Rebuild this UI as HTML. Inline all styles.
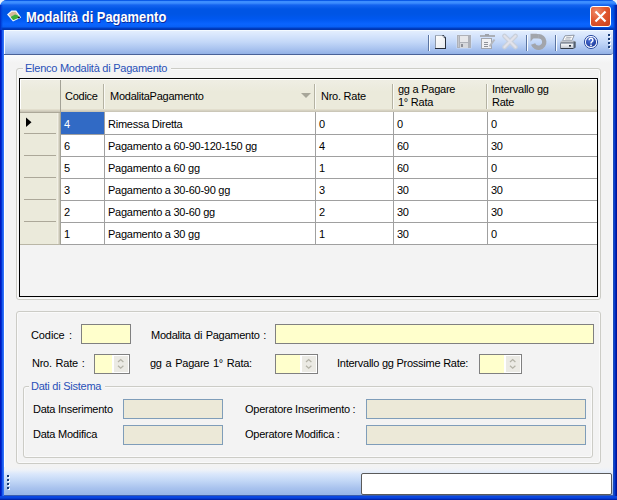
<!DOCTYPE html>
<html><head><meta charset="utf-8">
<style>
*{margin:0;padding:0;box-sizing:border-box}
html,body{width:617px;height:500px;overflow:hidden;background:#EAF2FB;font-family:"Liberation Sans",sans-serif;font-size:11px;color:#000}
.a{position:absolute}
.t{position:absolute;white-space:pre;line-height:13px;letter-spacing:-0.25px}
#frame{left:0;top:0;width:617px;height:500px;background:#0054E3;border-radius:7px 7px 0 0}
#title{left:0;top:0;width:617px;height:30px;background:linear-gradient(#0A5AE8 0px,#0A5AE8 1px,#3D8EFF 1px,#3D8EFF 3px,#1464F0 5px,#0055E5 9px,#0055E5 14px,#0058F0 19px,#0A64FF 24px,#0860F5 27px,#0040C8 28px,#0032A8 30px);border-radius:7px 7px 0 0}
#ttext{left:26px;top:9px;color:#fff;font-weight:bold;font-size:14px;line-height:16px;transform:scaleX(0.92);transform-origin:0 0;text-shadow:1px 1px 0 #0A2A9A}
#lb{left:0;top:30px;width:5px;height:470px;background:linear-gradient(90deg,#0018C0 0,#0018C0 1px,#0030D0 1px,#0030D0 2px,#1A5AF0 2px,#1A5AF0 3px,#3070F8 3px,#3070F8 4px,#FFFFFF 4px)}
#rb{left:612px;top:30px;width:5px;height:470px;background:linear-gradient(90deg,#F0FAFF 0,#F0FAFF 1px,#1C4AB8 1px,#1C4AB8 2px,#0840D0 2px,#0840D0 3px,#0028B4 3px,#0028B4 4px,#00149C 4px)}
#bb{left:0;top:496px;width:617px;height:4px;background:linear-gradient(#0A48E4 0px,#0A44DC 2px,#0030C0 3px,#001A98 4px)}
#client{left:4px;top:30px;width:609px;height:466px;background:linear-gradient(#FAFBFD 25px,#F3F3F3 33px)}
#tb{left:4px;top:30px;width:609px;height:25px;box-shadow:inset 1px 1px 0 #F4FAFF;background:linear-gradient(#E6F0FE 0px,#D8E6FC 5px,#C4D8F8 12px,#A9C3EF 19px,#93B1E6 24px);border-bottom:1px solid #4A6298;border-radius:0 0 3px 0}
#sb{left:4px;top:467px;width:609px;height:29px;background:linear-gradient(#F3F3F3 0px,#EEF2F8 3px,#DAE7FB 7px,#C2D7F6 14px,#A9C3EE 21px,#98B6E8 27px,#98B6E8 28px,#3A5CAD 28px)}
.grp{position:absolute;border:1px solid #CCCCC6;border-radius:3px;box-shadow:inset 0 0 0 1px #FAFAFA}
.gl{position:absolute;white-space:pre;line-height:13px;letter-spacing:-0.25px;color:#2850B8;background:#F3F3F3;padding:0 4px 0 2px}
.hd{background:linear-gradient(#EFEEE4,#EBEADB 12px)}
.tx{position:absolute;border:1px solid #808080;background:#FFFFCC}
.dis{position:absolute;border:1px solid #7F9DB9;background:#ECE9D8}
.dot{position:absolute;width:2px;height:2px;background:#193B74;box-shadow:1px 1px 0 #fff}
</style></head><body>
<div class="a" id="frame"></div>
<div class="a" id="title"></div>
<!-- title icon -->
<svg class="a" style="left:6px;top:10px" width="16" height="12" viewBox="0 0 16 12">
<polygon points="1,4.5 5.5,0.6 10.2,0.6 15.2,7.5 7,11.5" fill="#F4F8FF"/>
<polygon points="2.6,4.6 6,1.8 9.6,1.8 12,5 6,8" fill="#D7B998"/>
<polygon points="4.5,7 9,4.6 12.2,5.4 13.5,7.6 7.2,10.2" fill="#3CAE3C"/>
<polygon points="11.6,7.2 13.6,6.4 14.2,7.6 12.2,8.4" fill="#1A1A1A"/>
</svg>
<div class="a" style="left:612px;top:5px;width:5px;height:25px;background:linear-gradient(90deg,rgba(0,60,210,0) 0,rgba(0,64,208,.6) 2px,#0030C0 3px,#001CA0 5px)"></div>
<div class="a" style="left:0;top:5px;width:3px;height:25px;background:linear-gradient(90deg,#0028C0 0,#0040D8 1px,rgba(0,80,230,0) 3px)"></div>
<div class="a" id="ttext">Modalità di Pagamento</div>
<!-- close button -->
<div class="a" style="left:590px;top:6px;width:21px;height:21px;border:1px solid #fff;border-radius:3px;background:radial-gradient(circle at 30% 25%,#EE8A6A 0,#E2582F 45%,#C8401C 100%)"></div>
<svg class="a" style="left:590px;top:6px" width="21" height="21" viewBox="0 0 21 21"><path d="M5.5 5.5L15.5 15.5M15.5 5.5L5.5 15.5" stroke="#fff" stroke-width="2.2"/></svg>
<div class="a" id="client"></div>
<div class="a" id="lb"></div><div class="a" id="rb"></div><div class="a" id="bb"></div>
<div class="a" id="tb"></div>
<!-- toolbar separators -->
<div class="a" style="left:428px;top:35px;width:1px;height:16px;background:#5A74A2;box-shadow:1px 0 0 #F8FCFF"></div>
<div class="a" style="left:526px;top:35px;width:1px;height:16px;background:#5A74A2;box-shadow:1px 0 0 #F8FCFF"></div>
<div class="a" style="left:555px;top:35px;width:1px;height:16px;background:#5A74A2;box-shadow:1px 0 0 #F8FCFF"></div>
<!-- new doc -->
<svg class="a" style="left:434px;top:34px" width="14" height="16" viewBox="0 0 14 16">
<defs><linearGradient id="pg" x1="0" y1="0" x2="1" y2="1"><stop offset="0" stop-color="#fff"/><stop offset="1" stop-color="#E4E8EE"/></linearGradient></defs>
<path d="M1 1H9L12 4V15H1Z" fill="url(#pg)"/>
<rect x="1" y="1" width="1" height="14" fill="#8E98A8"/>
<rect x="1" y="1" width="8" height="1" fill="#A4AEBC"/>
<rect x="11" y="4" width="1" height="11" fill="#262E3C"/>
<rect x="1" y="14" width="11" height="1" fill="#262E3C"/>
<path d="M8.5 1H9.5L12 3.5V4.5H11L8.5 2Z" fill="#262E3C"/>
<rect x="9" y="2" width="1.5" height="1.5" fill="#B0B8C4"/>
</svg>
<!-- save disabled -->
<svg class="a" style="left:456px;top:34px" width="16" height="15" viewBox="0 0 16 15">
<rect x="0.5" y="0.5" width="15" height="14" fill="#F2F4F8" opacity=".5"/>
<rect x="1" y="1" width="14" height="13" fill="#AEB1B8"/>
<rect x="2" y="2" width="1" height="11" fill="#C4C6CC"/>
<rect x="4" y="2" width="8" height="6" fill="#E6E7EA"/>
<rect x="4" y="9" width="8" height="5" fill="#D6D8DC"/>
<rect x="5" y="10" width="2" height="3" fill="#8E9098"/>
</svg>
<!-- edit disabled -->
<svg class="a" style="left:479px;top:33px" width="17" height="17" viewBox="0 0 17 17">
<rect x="1" y="2" width="15" height="2" fill="#ABAFB6"/>
<rect x="6" y="1" width="4" height="2" fill="#9EA2AA"/>
<rect x="2.5" y="5.5" width="10" height="10" fill="#F0F1F3" stroke="#A2A6AE"/>
<path d="M5 9.5H9M5 11.5H9M5 13.5H9" stroke="#8E929A"/>
<path d="M15.5 6.5L10.5 13.5" stroke="#B4B8C0" stroke-width="2"/>
</svg>
<!-- delete disabled -->
<svg class="a" style="left:501px;top:33px" width="18" height="17" viewBox="0 0 18 17">
<path d="M3.5 3L14.5 14M14.5 3L3.5 14" stroke="#C8D0DC" stroke-width="4.6" stroke-linecap="round"/>
<path d="M3.5 3L14.5 14M14.5 3L3.5 14" stroke="#E2E2EA" stroke-width="2.2" stroke-linecap="round"/>
</svg>
<!-- undo disabled -->
<svg class="a" style="left:529px;top:32px" width="20" height="20" viewBox="0 0 20 20">
<path d="M9.5 4.25A5.75 5.75 0 1 1 4.1 11.97" fill="none" stroke="#A2A5AB" stroke-width="4.4"/>
<path d="M9.8 4.25H4" stroke="#A2A5AB" stroke-width="4.4"/>
<path d="M1.5 1.8H8L1.5 9.8Z" fill="#A2A5AB"/>
</svg>
<!-- print -->
<svg class="a" style="left:559px;top:33px" width="18" height="17" viewBox="0 0 18 17">
<defs><linearGradient id="pf" x1="0" y1="0" x2="0" y2="1"><stop offset="0" stop-color="#FAFBFC"/><stop offset="1" stop-color="#C4C9D2"/></linearGradient></defs>
<path d="M6 2.8L15.2 2.2L12.8 7.6H3.6Z" fill="#fff" stroke="#6A7280" stroke-width=".7"/>
<path d="M7.2 4.3H12.6M6.2 6H11.6" stroke="#8A92A0" stroke-width=".8"/>
<path d="M1.5 8.2L3 7.6H14.8L16.5 8.4V10H1.5Z" fill="#BFC4CC"/>
<rect x="1.5" y="9.6" width="13" height="1" fill="#3C4450"/>
<rect x="1.5" y="10.6" width="13" height="4.6" fill="url(#pf)"/>
<rect x="10" y="12" width="2" height="1.6" fill="#2E3640"/>
<rect x="1.5" y="15" width="13" height="1" fill="#343C48"/>
<path d="M14.5 8.2L16.7 8.8V14.4L14.5 16Z" fill="#55606E"/>
<rect x="1" y="10.4" width="0.8" height="5" fill="#5A6270"/>
</svg>
<!-- help -->
<svg class="a" style="left:583px;top:34px" width="16" height="16" viewBox="0 0 16 16">
<defs><radialGradient id="hg" cx=".4" cy=".35" r=".7"><stop offset="0" stop-color="#4A70D8"/><stop offset="1" stop-color="#1E3A98"/></radialGradient></defs>
<circle cx="8" cy="8" r="6.6" fill="#F4F8FF" stroke="#3050A4" stroke-width="1"/>
<circle cx="8" cy="8" r="5.1" fill="url(#hg)"/>
<path d="M6.1 6.3A1.9 1.9 0 1 1 8.8 7.9C8.2 8.3 8 8.7 8 9.6" fill="none" stroke="#fff" stroke-width="1.5"/>
<rect x="7.2" y="10.6" width="1.6" height="1.6" fill="#fff"/>
</svg>
<div class="dot" style="left:608px;top:34px"></div><div class="dot" style="left:608px;top:38px"></div><div class="dot" style="left:608px;top:42px"></div><div class="dot" style="left:608px;top:46px"></div>

<!-- Group 1 -->
<div class="grp" style="left:16px;top:68px;width:585px;height:232px"></div>
<div class="gl" style="left:23px;top:62px">Elenco Modalità di Pagamento</div>

<!-- Grid -->
<div class="a" style="left:19px;top:78px;width:579px;height:219px;border:1px solid #000;background:#F3F3F3"></div>
<div class="a hd" style="left:20px;top:79px;width:577px;height:33px;border-top:1px solid #fff;border-left:1px solid #fff"></div>
<div class="a" style="left:20px;top:109px;width:577px;height:1px;background:#E2DECD"></div>
<div class="a" style="left:20px;top:110px;width:577px;height:1px;background:#D6D2C2"></div>
<div class="a" style="left:20px;top:111px;width:577px;height:1px;background:#CBC7B8"></div>
<!-- header separators -->
<div class="a" style="left:60px;top:80px;width:1px;height:32px;background:#A3A296"></div>
<div class="a" style="left:103px;top:84px;width:1px;height:25px;background:#B4B2A2;box-shadow:1px 0 0 #FAFAF5"></div>
<div class="a" style="left:314px;top:84px;width:1px;height:25px;background:#B4B2A2;box-shadow:1px 0 0 #FAFAF5"></div>
<div class="a" style="left:392px;top:84px;width:1px;height:25px;background:#B4B2A2;box-shadow:1px 0 0 #FAFAF5"></div>
<div class="a" style="left:486px;top:84px;width:1px;height:25px;background:#B4B2A2;box-shadow:1px 0 0 #FAFAF5"></div>
<div class="t" style="left:65px;top:90px">Codice</div>
<div class="t" style="left:110px;top:90px">ModalitaPagamento</div>
<svg class="a" style="left:300px;top:92px" width="12" height="7" viewBox="0 0 12 7"><path d="M1 1H11L6 6Z" fill="#A7A699"/></svg>
<div class="t" style="left:321px;top:90px">Nro. Rate</div>
<div class="t" style="left:398px;top:83px">gg a Pagare
1° Rata</div>
<div class="t" style="left:492px;top:83px">Intervallo gg
Rate</div>

<!-- row header column -->
<div class="a" style="left:20px;top:112px;width:40px;height:133px;background:#EBEADB"></div>
<div class="a" style="left:57px;top:112px;width:1px;height:133px;background:#F2F0E6"></div>
<div class="a" style="left:58px;top:112px;width:1px;height:133px;background:#DCD9CA"></div>
<div class="a" style="left:59px;top:112px;width:1px;height:133px;background:#C8C5B5"></div>
<div class="a" style="left:20px;top:112px;width:40px;height:1px;background:#ACA899"></div>
<!-- data area -->
<div class="a" style="left:60px;top:112px;width:537px;height:133px;background:#fff;border-left:1px solid #A3A296"></div>
<div class="a" style="left:60px;top:134px;width:537px;height:1px;background:#A0A0A0"></div>
<div class="a" style="left:24px;top:133px;width:32px;height:1px;background:#ACA899"></div>
<div class="a" style="left:60px;top:156px;width:537px;height:1px;background:#A0A0A0"></div>
<div class="a" style="left:24px;top:155px;width:32px;height:1px;background:#ACA899"></div>
<div class="a" style="left:60px;top:178px;width:537px;height:1px;background:#A0A0A0"></div>
<div class="a" style="left:24px;top:177px;width:32px;height:1px;background:#ACA899"></div>
<div class="a" style="left:60px;top:200px;width:537px;height:1px;background:#A0A0A0"></div>
<div class="a" style="left:24px;top:199px;width:32px;height:1px;background:#ACA899"></div>
<div class="a" style="left:60px;top:222px;width:537px;height:1px;background:#A0A0A0"></div>
<div class="a" style="left:24px;top:221px;width:32px;height:1px;background:#ACA899"></div>
<div class="a" style="left:60px;top:244px;width:537px;height:1px;background:#A0A0A0"></div>
<div class="a" style="left:104px;top:112px;width:1px;height:133px;background:#A0A0A0"></div>
<div class="a" style="left:315px;top:112px;width:1px;height:133px;background:#A0A0A0"></div>
<div class="a" style="left:393px;top:112px;width:1px;height:133px;background:#A0A0A0"></div>
<div class="a" style="left:487px;top:112px;width:1px;height:133px;background:#A0A0A0"></div>
<div class="a" style="left:61px;top:112px;width:43px;height:22px;background:#316AC5"></div>
<div class="t" style="left:64px;top:118px;color:#fff">4</div>
<div class="t" style="left:108px;top:118px">Rimessa Diretta</div>
<div class="t" style="left:319px;top:118px">0</div>
<div class="t" style="left:397px;top:118px">0</div>
<div class="t" style="left:491px;top:118px">0</div>
<div class="t" style="left:64px;top:140px">6</div>
<div class="t" style="left:108px;top:140px">Pagamento a 60-90-120-150 gg</div>
<div class="t" style="left:319px;top:140px">4</div>
<div class="t" style="left:397px;top:140px">60</div>
<div class="t" style="left:491px;top:140px">30</div>
<div class="t" style="left:64px;top:162px">5</div>
<div class="t" style="left:108px;top:162px">Pagamento a 60 gg</div>
<div class="t" style="left:319px;top:162px">1</div>
<div class="t" style="left:397px;top:162px">60</div>
<div class="t" style="left:491px;top:162px">0</div>
<div class="t" style="left:64px;top:184px">3</div>
<div class="t" style="left:108px;top:184px">Pagamento a 30-60-90 gg</div>
<div class="t" style="left:319px;top:184px">3</div>
<div class="t" style="left:397px;top:184px">30</div>
<div class="t" style="left:491px;top:184px">30</div>
<div class="t" style="left:64px;top:206px">2</div>
<div class="t" style="left:108px;top:206px">Pagamento a 30-60 gg</div>
<div class="t" style="left:319px;top:206px">2</div>
<div class="t" style="left:397px;top:206px">30</div>
<div class="t" style="left:491px;top:206px">30</div>
<div class="t" style="left:64px;top:228px">1</div>
<div class="t" style="left:108px;top:228px">Pagamento a 30 gg</div>
<div class="t" style="left:319px;top:228px">1</div>
<div class="t" style="left:397px;top:228px">30</div>
<div class="t" style="left:491px;top:228px">0</div>
<div class="a" style="left:20px;top:244px;width:40px;height:1px;background:#B9B6A6"></div>
<svg class="a" style="left:25px;top:117px" width="8" height="11" viewBox="0 0 8 11"><path d="M1 0.5V10L6.5 5.25Z" fill="#000"/></svg>

<!-- Group 2 -->
<div class="grp" style="left:16px;top:311px;width:585px;height:153px"></div>
<div class="t" style="left:31px;top:329px;letter-spacing:-0.1px;word-spacing:1.5px">Codice :</div>
<div class="tx" style="left:81px;top:324px;width:50px;height:20px"></div>
<div class="t" style="left:151px;top:329px;word-spacing:0.7px">Modalita di Pagamento :</div>
<div class="tx" style="left:275px;top:324px;width:319px;height:20px"></div>
<div class="t" style="left:32px;top:357px;word-spacing:1px">Nro. Rate :</div>
<div class="tx spin" style="left:94px;top:354px;width:36px;height:20px"></div>
<div class="t" style="left:150px;top:357px;word-spacing:1px">gg a Pagare 1° Rata:</div>
<div class="tx spin" style="left:275px;top:354px;width:43px;height:20px"></div>
<div class="t" style="left:337px;top:357px">Intervallo gg Prossime Rate:</div>
<div class="tx spin" style="left:479px;top:354px;width:43px;height:20px"></div>
<svg class="a" style="left:112px;top:355px" width="17" height="18" viewBox="0 0 17 18"><rect width="17" height="18" fill="#fff"/><rect x="2" y="1" width="14" height="16" fill="#EBEAE4"/><path d="M6 7L8.7 4.5L11.4 7" fill="none" stroke="#B3B2A6" stroke-width="1.2"/><path d="M6 10.8L8.7 13.3L11.4 10.8" fill="none" stroke="#B3B2A6" stroke-width="1.2"/></svg>
<svg class="a" style="left:300px;top:355px" width="17" height="18" viewBox="0 0 17 18"><rect width="17" height="18" fill="#fff"/><rect x="2" y="1" width="14" height="16" fill="#EBEAE4"/><path d="M6 7L8.7 4.5L11.4 7" fill="none" stroke="#B3B2A6" stroke-width="1.2"/><path d="M6 10.8L8.7 13.3L11.4 10.8" fill="none" stroke="#B3B2A6" stroke-width="1.2"/></svg>
<svg class="a" style="left:504px;top:355px" width="17" height="18" viewBox="0 0 17 18"><rect width="17" height="18" fill="#fff"/><rect x="2" y="1" width="14" height="16" fill="#EBEAE4"/><path d="M6 7L8.7 4.5L11.4 7" fill="none" stroke="#B3B2A6" stroke-width="1.2"/><path d="M6 10.8L8.7 13.3L11.4 10.8" fill="none" stroke="#B3B2A6" stroke-width="1.2"/></svg>
<!-- Group 3 -->
<div class="grp" style="left:23px;top:386px;width:570px;height:72px"></div>
<div class="gl" style="left:29px;top:380px">Dati di Sistema</div>
<div class="t" style="left:33px;top:403px">Data Inserimento</div>
<div class="dis" style="left:123px;top:399px;width:100px;height:20px"></div>
<div class="t" style="left:245px;top:403px">Operatore Inserimento :</div>
<div class="dis" style="left:366px;top:399px;width:220px;height:20px"></div>
<div class="t" style="left:33px;top:428px">Data Modifica</div>
<div class="dis" style="left:123px;top:425px;width:100px;height:20px"></div>
<div class="t" style="left:245px;top:428px">Operatore Modifica :</div>
<div class="dis" style="left:366px;top:425px;width:220px;height:20px"></div>
<!-- status bar -->
<div class="a" id="sb"></div>
<div class="dot" style="left:7px;top:475px"></div><div class="dot" style="left:7px;top:479px"></div><div class="dot" style="left:7px;top:483px"></div><div class="dot" style="left:7px;top:487px"></div>
<div class="a" style="left:361px;top:473px;width:251px;height:22px;background:#fff;border:1px solid #5A5A5A;border-radius:2px"></div>
</body></html>
